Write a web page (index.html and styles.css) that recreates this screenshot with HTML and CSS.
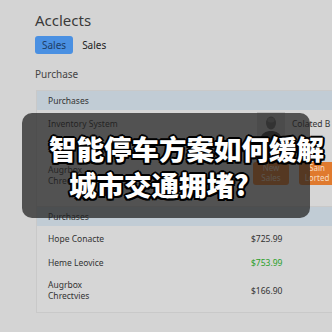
FILE: index.html
```html
<!DOCTYPE html>
<html>
<head>
	<title>Acclects</title>
	<link rel="stylesheet" href="styles.css">
</head>
<body>
	<div class="page">
		<h1 class="title">Acclects</h1>
		<div class="tabs">
			<span class="tab active">Sales</span>
			<span class="tab">Sales</span>
		</div>
		<div class="label">Purchase</div>

		<div class="card">
			<div class="head">Purchases</div>
			<div class="row row-top">
				<div class="name">Inventory System</div>
				<div class="avatar">
					<svg width="28" height="28" viewBox="0 0 28 28">
						<rect width="28" height="28" fill="#bdbdbd"/>
						<path d="M3 28 C4 21 9 19 14 19 C19 19 24 21 25 28 Z" fill="#3a3a3a"/>
						<ellipse cx="14" cy="11" rx="5" ry="6.5" fill="#6a6a6a"/>
						<ellipse cx="14" cy="8" rx="3.5" ry="2.5" fill="#8a8a8a"/>
					</svg>
				</div>
				<div class="extra">Colated B</div>
			</div>
			<div class="row row-btns">
				<div class="name">Augrbox<br>Chrec</div>
				<div class="btns">
					<span class="btn">New<br>Sales</span>
					<span class="btn">Sain<br>Lorted</span>
				</div>
			</div>
			<div class="head">Purchases</div>
			<div class="row">
				<div class="name">Hope Conacte</div>
				<div class="price">$725.99</div>
			</div>
			<div class="row">
				<div class="name">Heme Leovice</div>
				<div class="price green">$753.99</div>
			</div>
			<div class="row row-tall">
				<div class="name">Augrbox<br>Chrectvies</div>
				<div class="price">$166.90</div>
			</div>
		</div>
	</div>

	<div class="caption">
		<div class="line">智能停车方案如何缓解</div>
		<div class="line second">城市交通拥堵?</div>
	</div>
</body>
</html>
```

FILE: styles.css
```css
html, body {
	margin: 0;
	height: 100%;
	overflow: hidden;
}
body {
	background: #d4d4d4;
	font-family: "Noto Sans", "Open Sans", sans-serif;
	color: #333;
	position: relative;
}
.page { padding: 9px 0 0 35px; }
.title {
	margin: 0;
	font-size: 15px;
	font-weight: 400;
	line-height: 22px;
	color: #3a3a3a;
}
.tabs {
	display: flex;
	align-items: center;
	gap: 9px;
	margin-top: 5px;
}
.tab {
	font-size: 10px;
	line-height: 18px;
	color: #222;
}
.tab.active {
	background: #4a90e2;
	border-radius: 3px;
	padding: 0 7px;
	color: #1d3d66;
}
.label {
	margin-top: 13px;
	font-size: 10px;
	line-height: 14px;
	color: #444;
}
.card {
	margin: 9px 0 0 1px;
	width: 330px;
	border: 1px solid #c9c9c9;
	border-right: none;
	background: #d6d6d6;
	padding-bottom: 6px;
	overflow: hidden;
}
.head {
	background: #c1ccd5;
	height: 19px;
	line-height: 19px;
	padding-left: 11px;
	font-size: 8.5px;
	color: #333;
}
.row {
	display: flex;
	align-items: center;
	height: 24px;
	padding-left: 11px;
	font-size: 8.5px;
	color: #333;
}
.name { width: 203px; line-height: 11px; }
.price { font-size: 8.5px; color: #333; }
.price.green { color: #2aa02a; }
.row-tall { height: 32px; }
.row-top {
	height: 36px;
	align-items: flex-start;
	padding-top: 2px;
	box-sizing: border-box;
}
.row-top .name { padding-top: 6px; }
.avatar { margin-left: 6px; height: 28px; }
.extra { margin-left: 7px; padding-top: 6px; white-space: nowrap; }
.row-btns {
	height: 61px;
	align-items: flex-start;
	padding-top: 16px;
	box-sizing: border-box;
	border-bottom: 1px solid #c9c9c9;
}
.row-btns .name { padding-top: 2px; }
.btns { display: flex; gap: 10px; margin-left: 2px; }
.btn {
	width: 36px;
	height: 23px;
	border-radius: 3px;
	background: #e07a2e;
	color: #f6dcc2;
	font-size: 8px;
	line-height: 10px;
	text-align: center;
	padding-top: 1px;
	box-sizing: border-box;
}
.caption {
	position: absolute;
	left: 22px;
	top: 113px;
	width: 288px;
	height: 105px;
	border-radius: 10px;
	background: rgba(30, 30, 30, 0.72);
	padding: 17px 0 0 27px;
	box-sizing: border-box;
	white-space: nowrap;
}
.line {
	font-family: "Noto Sans CJK SC", sans-serif;
	font-size: 27.5px;
	font-weight: 900;
	line-height: 36px;
	color: #fff;
	text-shadow:
		2px 0 0 #000, -2px 0 0 #000, 0 2px 0 #000, 0 -2px 0 #000,
		1.5px 1.5px 0 #000, -1.5px 1.5px 0 #000, 1.5px -1.5px 0 #000, -1.5px -1.5px 0 #000;
}
.line.second { padding-left: 20px; }
```
